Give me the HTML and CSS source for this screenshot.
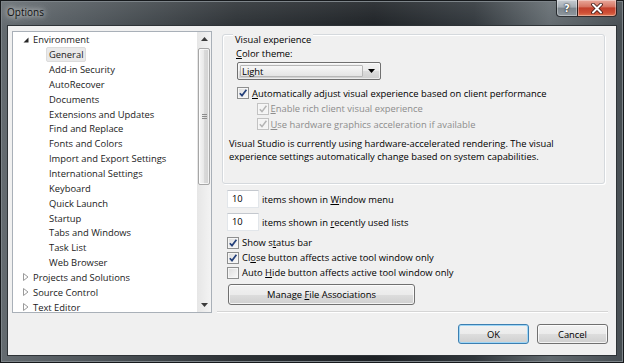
FILE: index.html
```html
<!DOCTYPE html>
<html>
<head>
<meta charset="utf-8">
<title>Options</title>
<link rel="stylesheet" href="styles.css">
</head>
<body>
<div class="window">
  <div class="titlebar">
    <span class="title">Options</span>
    <div class="caption-buttons">
      <div class="cap-btn help">?</div>
      <div class="cap-btn close">
        <svg width="14" height="11" viewBox="0 0 14 11"><path d="M3 1.5 L11 9.5 M11 1.5 L3 9.5" stroke="#3a1410" stroke-width="3.6" stroke-linecap="round"/><path d="M3 1.5 L11 9.5 M11 1.5 L3 9.5" stroke="#fff" stroke-width="2" stroke-linecap="round"/></svg>
      </div>
    </div>
  </div>
  <div class="client">
    <div class="tree">
      <div class="tree-items">
        <div class="node"><span class="exp"><svg width="6" height="6" viewBox="0 0 6 6"><path d="M5.5 0.5 L5.5 5.5 L0.5 5.5 Z" fill="#262626"/></svg></span>Environment</div>
        <div class="node child"><span class="sel">General</span></div>
        <div class="node child"><span>Add-in Security</span></div>
        <div class="node child"><span>AutoRecover</span></div>
        <div class="node child"><span>Documents</span></div>
        <div class="node child"><span>Extensions and Updates</span></div>
        <div class="node child"><span>Find and Replace</span></div>
        <div class="node child"><span>Fonts and Colors</span></div>
        <div class="node child"><span>Import and Export Settings</span></div>
        <div class="node child"><span>International Settings</span></div>
        <div class="node child"><span>Keyboard</span></div>
        <div class="node child"><span>Quick Launch</span></div>
        <div class="node child"><span>Startup</span></div>
        <div class="node child"><span>Tabs and Windows</span></div>
        <div class="node child"><span>Task List</span></div>
        <div class="node child"><span>Web Browser</span></div>
        <div class="node"><span class="exp"><svg width="6" height="8" viewBox="0 0 6 8"><path d="M0.5 0.5 L5 4 L0.5 7.5 Z" fill="#fff" stroke="#9a9a9a" stroke-width="1"/></svg></span>Projects and Solutions</div>
        <div class="node"><span class="exp"><svg width="6" height="8" viewBox="0 0 6 8"><path d="M0.5 0.5 L5 4 L0.5 7.5 Z" fill="#fff" stroke="#9a9a9a" stroke-width="1"/></svg></span>Source Control</div>
        <div class="node"><span class="exp"><svg width="6" height="8" viewBox="0 0 6 8"><path d="M0.5 0.5 L5 4 L0.5 7.5 Z" fill="#fff" stroke="#9a9a9a" stroke-width="1"/></svg></span>Text Editor</div>
      </div>
      <div class="scrollbar">
        <div class="sb-arrow"><svg width="7" height="4" viewBox="0 0 7 4"><path d="M0 4 L3.5 0 L7 4 Z" fill="#3b3b3b"/></svg></div>
        <div class="sb-track">
          <div class="sb-thumb"><span class="grip"></span></div>
        </div>
        <div class="sb-arrow"><svg width="7" height="4" viewBox="0 0 7 4"><path d="M0 0 L7 0 L3.5 4 Z" fill="#3b3b3b"/></svg></div>
      </div>
    </div>

    <div class="page">
      <div class="group">
        <div class="group-title">Visual experience</div>
        <div class="label"><u>C</u>olor theme:</div>
        <div class="combo">
          <span class="combo-text">Light</span>
          <span class="combo-arrow"><svg width="7" height="4" viewBox="0 0 7 4"><path d="M0 0 L7 0 L3.5 4 Z" fill="#000"/></svg></span>
        </div>
        <div class="check main">
          <span class="box"><svg width="10" height="10" viewBox="0 0 10 10"><path d="M1.8 5.2 L4 7.6 L8.4 1.8" fill="none" stroke="#24407a" stroke-width="1.7"/></svg></span>
          <span><u>A</u>utomatically adjust visual experience based on client performance</span>
        </div>
        <div class="check sub disabled">
          <span class="box"><svg width="10" height="10" viewBox="0 0 10 10"><path d="M1.8 5.2 L4 7.6 L8.4 1.8" fill="none" stroke="#b4b4b4" stroke-width="1.5"/></svg></span>
          <span><u>E</u>nable rich client visual experience</span>
        </div>
        <div class="check sub disabled">
          <span class="box"><svg width="10" height="10" viewBox="0 0 10 10"><path d="M1.8 5.2 L4 7.6 L8.4 1.8" fill="none" stroke="#b4b4b4" stroke-width="1.5"/></svg></span>
          <span><u>U</u>se hardware graphics acceleration if available</span>
        </div>
        <p class="note">Visual Studio is currently using hardware-accelerated rendering. The visual experience settings automatically change based on system capabilities.</p>
      </div>

      <div class="num-row first">
        <span class="num">10</span>
        <span>items shown in <u>W</u>indow menu</span>
      </div>
      <div class="num-row">
        <span class="num">10</span>
        <span>items shown in <u>r</u>ecently used lists</span>
      </div>

      <div class="checks">
        <div class="check">
          <span class="box"><svg width="10" height="10" viewBox="0 0 10 10"><path d="M1.8 5.2 L4 7.6 L8.4 1.8" fill="none" stroke="#24407a" stroke-width="1.7"/></svg></span>
          <span>Show s<u>t</u>atus bar</span>
        </div>
        <div class="check">
          <span class="box"><svg width="10" height="10" viewBox="0 0 10 10"><path d="M1.8 5.2 L4 7.6 L8.4 1.8" fill="none" stroke="#24407a" stroke-width="1.7"/></svg></span>
          <span>Cl<u>o</u>se button affects active tool window only</span>
        </div>
        <div class="check">
          <span class="box"></span>
          <span>Auto <u>H</u>ide button affects active tool window only</span>
        </div>
      </div>

      <button class="btn manage">Manage <u>F</u>ile Associations</button>

      <div class="sep"></div>

      <div class="actions">
        <button class="btn ok">OK</button>
        <button class="btn">Cancel</button>
      </div>
    </div>
  </div>
</div>
</body>
</html>
```

FILE: styles.css
```css
* { box-sizing: border-box; }

html, body {
  margin: 0;
  padding: 0;
}

body {
  width: 624px;
  height: 363px;
  overflow: hidden;
  background: #2b3035;
  font-family: "Open Sans", "Noto Sans", sans-serif;
  font-size: 9.4px;
  color: #000;
}

.window {
  width: 624px;
  height: 363px;
  display: flex;
  flex-direction: column;
  padding: 0 8px 8px;
  background:
    linear-gradient(to bottom, rgba(255,255,255,0.10), rgba(255,255,255,0) 30px),
    linear-gradient(to right, #646b70 0%, #50575c 14%, #2c3135 38%, #1d2125 60%, #30363b 76%, #626a6f 88%, #464d52 100%);
  box-shadow: inset 0 0 0 1px #16191c, inset 0 0 0 2px #7d8489;
}

/* Title bar */
.titlebar {
  height: 26px;
  display: flex;
  align-items: flex-start;
}

.title {
  margin-left: -1px;
  margin-top: 5px;
  line-height: 14px;
  font-size: 10px;
  color: #111;
  text-shadow: 0 0 5px rgba(255,255,255,0.9), 0 0 9px rgba(255,255,255,0.7);
}

.caption-buttons {
  margin-left: auto;
  margin-right: -1px;
  display: flex;
}

.cap-btn {
  height: 17px;
  display: flex;
  align-items: center;
  justify-content: center;
  border: 1px solid rgba(20,24,28,0.85);
  border-top: none;
  box-shadow: inset 0 0 0 1px rgba(255,255,255,0.35);
}

.help {
  width: 21px;
  border-radius: 0 0 0 4px;
  border-right: none;
  background: linear-gradient(to bottom, #c6ccd2 0%, #a3abb2 45%, #7c858c 50%, #8f989f 100%);
  color: #fff;
  font-family: "DejaVu Sans", sans-serif;
  font-weight: bold;
  font-size: 10px;
  text-shadow: 0 0 2px #222, 0 0 1px #222;
}

.close {
  width: 40px;
  border-radius: 0 0 4px 0;
  background: linear-gradient(to bottom, #e9a99c 0%, #d67563 42%, #c2402c 50%, #cf4f36 80%, #e07a55 100%);
}

/* Client area */
.client {
  flex: 1;
  display: flex;
  align-items: flex-start;
  padding: 5px 8px 0 4px;
  background: #f0f0f0;
  box-shadow: 0 0 0 1px #2e3337;
}

/* Tree */
.tree {
  width: 200px;
  height: 282px;
  flex-shrink: 0;
  display: flex;
  background: #fff;
  border: 1px solid #a9b0b8;
}

.tree-items {
  flex: 1;
  overflow: hidden;
  padding-top: 0.5px;
}

.node {
  height: 14.85px;
  display: flex;
  align-items: center;
  white-space: nowrap;
  color: #1b1b1b;
  padding-left: 10px;
}

.exp {
  width: 6px;
  margin-right: 4px;
  display: flex;
  align-items: center;
  justify-content: center;
}

.node.child {
  padding-left: 34px;
}

.node.child span {
  padding: 0 1px 0 2px;
  line-height: 13px;
  border: 1px solid transparent;
  margin-left: -1px;
}

.node.child .sel {
  background: #e9e9e9;
  border-color: #dcdcdc;
  border-radius: 2px;
}

.scrollbar {
  width: 14px;
  display: flex;
  flex-direction: column;
  background: linear-gradient(to right, #e6e6e6, #f3f3f3);
}

.sb-arrow {
  height: 14px;
  display: flex;
  align-items: center;
  justify-content: center;
}

.sb-track {
  flex: 1;
  padding: 2px 1px 0 1px;
}

.sb-thumb {
  height: 137px;
  border: 1px solid #a6a6a6;
  border-radius: 2px;
  background: linear-gradient(to right, #f6f6f6, #e8e8e8 50%, #dadada 51%, #d2d2d2);
  box-shadow: inset 0 0 0 1px rgba(255,255,255,0.7);
  display: flex;
  align-items: center;
  justify-content: center;
}

.grip {
  width: 5px;
  height: 5px;
  background: repeating-linear-gradient(to bottom, #8c8c8c 0, #8c8c8c 1px, transparent 1px, transparent 2px);
}

/* Right page */
.page {
  flex: 1;
  margin-left: 5px;
  padding-top: 3px;
  display: flex;
  flex-direction: column;
  align-items: flex-start;
}

.group {
  align-self: stretch;
  margin: 0 3px 0 5px;
  height: 150px;
  padding: 0 13px;
  border: 1px solid #d5d9dd;
  border-radius: 3px;
  box-shadow: inset 1px 1px 0 #fff, 1px 1px 0 #fff;
  display: flex;
  flex-direction: column;
  align-items: flex-start;
}

.group-title {
  margin: -2px 0 0 -3px;
  padding: 0 2px;
  line-height: 13px;
  background: #f0f0f0;
}

.label {
  margin-top: 1px;
  line-height: 14px;
}

.combo {
  margin: 1px 0 0 1px;
  width: 144px;
  height: 18px;
  display: flex;
  align-items: center;
  border: 1px solid #707070;
  border-radius: 2px;
  background: linear-gradient(to bottom, #f2f2f2 0%, #ebebeb 50%, #dddddd 51%, #cfcfcf 100%);
  box-shadow: inset 0 0 0 1px rgba(255,255,255,0.6);
}

.combo-text {
  flex: 1;
  align-self: stretch;
  margin: 2px 0 2px 2px;
  padding-left: 1px;
  line-height: 12px;
  border: 1px solid #b7b7b7;
  border-radius: 1px;
  background: linear-gradient(to bottom, #f7f7f7, #e4e4e4);
}

.combo-arrow {
  width: 17px;
  display: flex;
  justify-content: center;
}

.check {
  display: flex;
  align-items: center;
  height: 15px;
  white-space: nowrap;
}

.check .box {
  width: 12px;
  height: 12px;
  margin-right: 3px;
  flex-shrink: 0;
  border: 1px solid #8e8f8f;
  background: linear-gradient(135deg, #dcdcdc, #fafafa);
  box-shadow: inset 0 0 0 1px #f6f6f6;
  display: flex;
  align-items: center;
  justify-content: center;
}

.check.main {
  margin-top: 5.5px;
  margin-left: 1px;
  height: 15.5px;
}

.check.sub {
  margin-left: 20.5px;
  height: 15.5px;
}

.check.sub .box {
  margin-right: 2px;
}

.check.disabled {
  color: #8d8d8d;
}

.check.disabled .box {
  border-color: #c2c2c2;
  background: #f4f4f4;
}

.note {
  margin: 4.5px 0 0 -7px;
  line-height: 13px;
}

.num-row {
  display: flex;
  align-items: center;
  margin: 5px 0 0 10px;
}

.num-row.first {
  margin-top: 6px;
}

.num {
  width: 32px;
  height: 18px;
  margin-right: 3px;
  padding-left: 4px;
  line-height: 16px;
  background: #fff;
  border: 1px solid #e2e6ea;
  border-top-color: #c4c8ce;
}

.checks {
  margin: 4px 0 0 10px;
}

.btn {
  font-family: inherit;
  font-size: inherit;
  color: #000;
  padding: 0;
  border: 1px solid #707070;
  border-radius: 3px;
  background: linear-gradient(to bottom, #f2f2f2 0%, #ebebeb 50%, #dddddd 51%, #cfcfcf 100%);
  box-shadow: inset 0 0 0 1px rgba(255,255,255,0.75);
}

.manage {
  margin: 4px 0 0 11px;
  width: 187px;
  height: 21px;
}

.sep {
  align-self: stretch;
  margin-top: 6px;
  height: 2px;
  border-top: 1px solid #d5d5d5;
  border-bottom: 1px solid #fff;
}

.actions {
  align-self: stretch;
  margin-top: 11px;
  display: flex;
  justify-content: flex-end;
  gap: 8px;
}

.actions .btn {
  width: 71px;
  height: 20px;
}

.ok {
  border-color: #3c7fb1;
  box-shadow: inset 0 0 0 1px #9fd6f6;
}
```
